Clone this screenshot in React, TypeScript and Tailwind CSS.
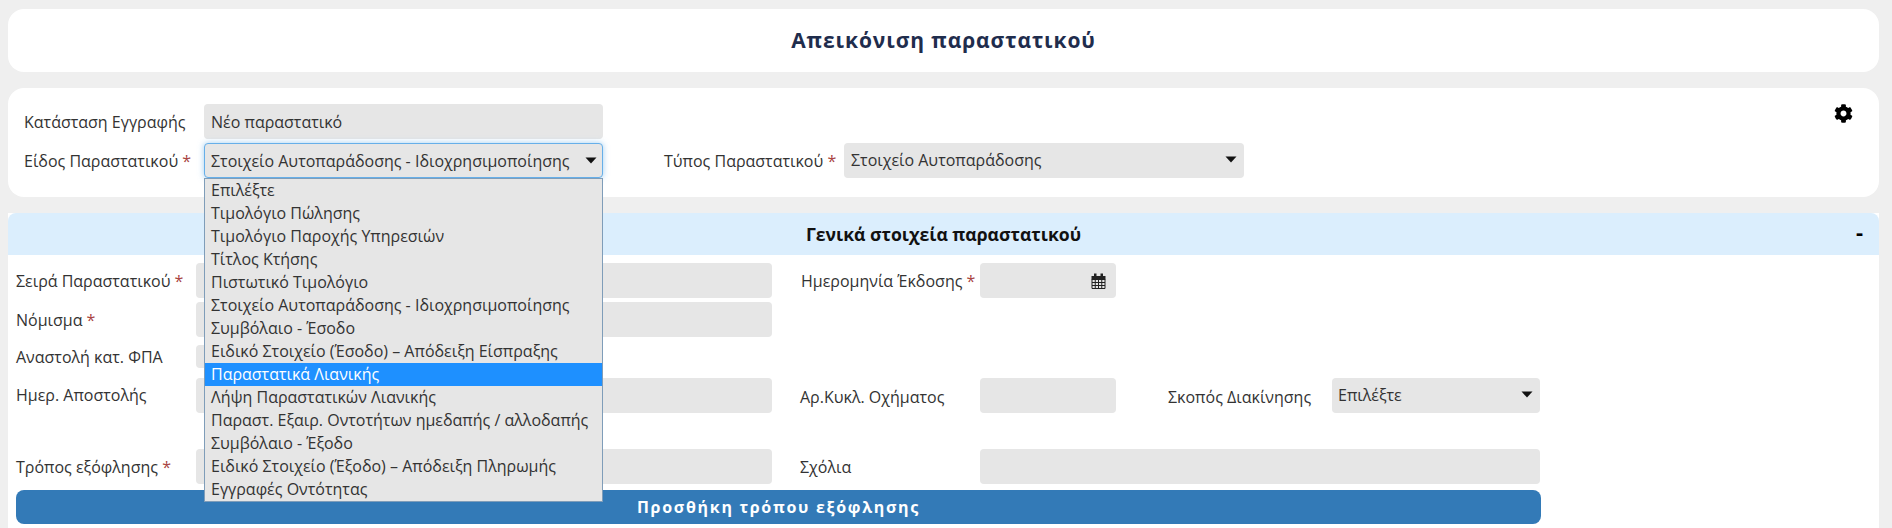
import { FaCog } from "react-icons/fa";

const options = [
  "Επιλέξτε",
  "Τιμολόγιο Πώλησης",
  "Τιμολόγιο Παροχής Υπηρεσιών",
  "Τίτλος Κτήσης",
  "Πιστωτικό Τιμολόγιο",
  "Στοιχείο Αυτοπαράδοσης - Ιδιοχρησιμοποίησης",
  "Συμβόλαιο - Έσοδο",
  "Ειδικό Στοιχείο (Έσοδο) – Απόδειξη Είσπραξης",
  "Παραστατικά Λιανικής",
  "Λήψη Παραστατικών Λιανικής",
  "Παραστ. Εξαιρ. Οντοτήτων ημεδαπής / αλλοδαπής",
  "Συμβόλαιο - Έξοδο",
  "Ειδικό Στοιχείο (Έξοδο) – Απόδειξη Πληρωμής",
  "Εγγραφές Οντότητας",
];

function Label({ text, required, className }: { text: string; required?: boolean; className?: string }) {
  return (
    <span className={`shrink-0 text-base leading-5 text-[#333] ${className ?? ""}`}>
      {text}
      {required && <span className="text-[#a94442]"> *</span>}
    </span>
  );
}

function Arrow() {
  return (
    <svg width="12" height="7" viewBox="0 0 12 7" className="shrink-0">
      <path d="M0.5 0.5h11L6 6.5z" fill="#111" />
    </svg>
  );
}

function Calendar() {
  return (
    <svg width="15" height="16" viewBox="0 0 15 16" className="shrink-0">
      <path d="M0.5 3h14v4h-14z" fill="#222" />
      <path d="M3 0.5h2.5v4H3zM9.5 0.5H12v4H9.5z" fill="#222" />
      <path
        d="M1 6.5h13v9H1zM1 9.5h13M1 12.5h13M4.25 6.5v9M7.5 6.5v9M10.75 6.5v9"
        fill="none"
        stroke="#222"
        strokeWidth="1"
      />
    </svg>
  );
}

function Field({ className }: { className: string }) {
  return <div className={`h-[35px] shrink-0 rounded bg-[#e6e6e6] ${className}`} />;
}

export default function App() {
  return (
    <div className="flex h-[528px] flex-col overflow-hidden bg-[#efefef] pt-[9px] pl-2 pr-[13px] font-['Open_Sans',sans-serif]">
      <div className="flex h-[63px] shrink-0 items-center justify-center rounded-2xl bg-white">
        <h1 className="text-[21px] font-bold tracking-[0.9px] text-[#1f2d4d]">Απεικόνιση παραστατικού</h1>
      </div>

      <div className="relative mt-4 h-[109px] shrink-0 rounded-2xl bg-white pl-4 pt-4">
        <div className="flex items-center">
          <Label text="Κατάσταση Εγγραφής" className="w-[180px]" />
          <div className="flex h-[35px] w-[399px] items-center rounded bg-[#e6e6e6] px-[7px] text-base text-[#333]">
            Νέο παραστατικό
          </div>
        </div>
        <div className="mt-[4px] flex items-center">
          <Label text="Είδος Παραστατικού" required className="w-[180px]" />
          <div className="relative w-[399px]">
            <div className="flex h-[35px] items-center justify-between rounded border border-[#66afe9] bg-[#e6e6e6] pl-[6px] pr-[5px] text-base text-[#333] shadow-[0_0_6px_rgba(102,175,233,0.6)]">
              <span>Στοιχείο Αυτοπαράδοσης - Ιδιοχρησιμοποίησης</span>
              <Arrow />
            </div>
            <ul className="absolute left-0 right-0 top-[35px] z-10 border border-[#7f9db9] bg-[#e6e6e6] text-base text-[#333]">
              {options.map((o) => (
                <li
                  key={o}
                  className={
                    o === "Παραστατικά Λιανικής"
                      ? "h-[23px] bg-[#1e90ff] pl-[6px] leading-[23px] text-white"
                      : "h-[23px] pl-[6px] leading-[23px]"
                  }
                >
                  {o}
                </li>
              ))}
            </ul>
          </div>
          <Label text="Τύπος Παραστατικού" required className="ml-[61px] w-[180px]" />
          <div className="flex h-[35px] w-[400px] items-center justify-between rounded bg-[#e6e6e6] pb-[2px] pl-[7px] pr-[7px] text-base text-[#333]">
            <span>Στοιχείο Αυτοπαράδοσης</span>
            <Arrow />
          </div>
        </div>
        <FaCog className="absolute right-[26px] top-4 text-[19px] text-black" />
      </div>

      <div className="mt-4 flex flex-1 flex-col bg-white">
        <div className="relative flex h-[42px] shrink-0 items-center justify-center rounded-t-lg bg-[#dbeefd]">
          <h2 className="text-[17.6px] font-bold text-[#111]">Γενικά στοιχεία παραστατικού</h2>
          <span className="absolute right-4 top-[2px] text-[22px] font-bold text-black">-</span>
        </div>

        <div className="flex flex-col pl-2 pt-2">
          <div className="flex h-[35px] items-center">
            <Label text="Σειρά Παραστατικού" required className="w-[180px]" />
            <Field className="w-[576px]" />
            <Label text="Ημερομηνία Έκδοσης" required className="ml-[29px] w-[179px]" />
            <div className="flex h-[35px] w-[136px] items-center justify-end rounded bg-[#e6e6e6] pr-[10px]">
              <Calendar />
            </div>
          </div>
          <div className="mt-1 flex h-[35px] items-center">
            <Label text="Νόμισμα" required className="w-[180px]" />
            <Field className="w-[576px]" />
          </div>
          <div className="mt-2 flex h-[23px] items-center">
            <Label text="Αναστολή κατ. ΦΠΑ" className="w-[180px]" />
            <div className="h-[23px] w-[200px] rounded bg-[#e6e6e6]" />
          </div>
          <div className="mt-[10px] flex h-[35px] items-start">
            <Label text="Ημερ. Αποστολής" className="mt-[7px] w-[180px]" />
            <Field className="w-[576px]" />
            <Label text="Αρ.Κυκλ. Οχήματος" className="ml-[28px] mt-[9px] w-[180px]" />
            <Field className="w-[136px]" />
            <Label text="Σκοπός Διακίνησης" className="ml-[52px] mt-[9px] w-[164px]" />
            <div className="flex h-[35px] w-[208px] items-center justify-between rounded bg-[#e6e6e6] pb-[2px] pl-[6px] pr-[7px] text-base text-[#333]">
              <span>Επιλέξτε</span>
              <Arrow />
            </div>
          </div>
          <div className="mt-9 flex h-[35px] items-center">
            <Label text="Τρόπος εξόφλησης" required className="w-[180px]" />
            <Field className="w-[576px]" />
            <Label text="Σχόλια" className="ml-[28px] w-[180px]" />
            <Field className="w-[560px]" />
          </div>
          <button className="mt-[6px] h-[34px] w-[1525px] rounded-lg bg-[#337ab7] text-center text-base font-bold tracking-[1.7px] text-white">
            Προσθήκη τρόπου εξόφλησης
          </button>
        </div>
      </div>
    </div>
  );
}
